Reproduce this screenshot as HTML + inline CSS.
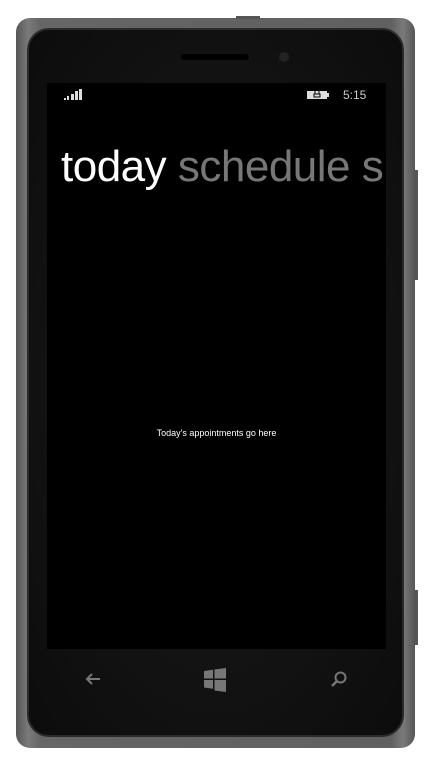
<!DOCTYPE html>
<html><head><style>
body{margin:0;width:431px;height:768px;background:#fff;position:relative;overflow:hidden;font-family:"Liberation Sans",sans-serif}
.body{position:absolute;left:16px;top:18px;width:399px;height:730px;border-radius:14px;background:linear-gradient(90deg,#555,#7a7a7a 3%,#666 6%,#606060 94%,#7a7a7a 97%,#555)}
.btn{position:absolute;background:#555}
.bez{position:absolute;left:27px;top:28px;width:377px;height:709px;border-radius:22px;background:radial-gradient(ellipse at 50% 50%,#1c1c1c,#0c0c0c);border:2px solid #2a2a2a;box-sizing:border-box}
.scr{position:absolute;left:47px;top:83px;width:339px;height:566px;background:#000;overflow:hidden}
.spk{position:absolute;left:181px;top:54px;width:68px;height:6px;border-radius:3px;background:#000}
.cam{position:absolute;left:279px;top:52px;width:10px;height:10px;border-radius:50%;background:#222}
</style></head><body>
<div class="body"></div>
<div class="btn" style="left:236px;top:16px;width:24px;height:3px"></div>
<div class="btn" style="left:414px;top:170px;width:4px;height:110px"></div>
<div class="btn" style="left:414px;top:590px;width:4px;height:55px"></div>
<div class="bez"></div>
<div class="spk"></div><div class="cam"></div>
<div class="scr">
 <svg style="position:absolute;left:17px;top:6px" width="20" height="12"><rect x="0" y="9" width="2" height="2" fill="#ddd"/><rect x="3" y="7" width="2" height="4" fill="#ddd"/><rect x="7" y="5" width="3" height="6" fill="#ddd"/><rect x="11" y="2" width="3" height="9" fill="#ddd"/><rect x="15" y="0" width="3" height="11" fill="#ddd"/></svg>
 <svg style="position:absolute;left:260px;top:6px" width="24" height="12"><rect x="0" y="2" width="20" height="8" fill="#ddd"/><rect x="20" y="4" width="2" height="4" fill="#ddd"/><path d="M8 1v4M12 1v4M7 5h6v3h-6z" stroke="#000" stroke-width="1" fill="none"/></svg>
 <div style="position:absolute;left:296px;top:5px;color:#ccc;font-size:12px">5:15</div>
 <div style="position:absolute;left:14px;top:59px;font-size:44px;white-space:nowrap;color:#fff;letter-spacing:-0.5px">today <span style="color:#777">schedule s</span></div>
 <div style="position:absolute;left:0;width:339px;top:345px;text-align:center;color:#fff;font-size:9px">Today's appointments go here</div>
</div>
<svg style="position:absolute;left:84px;top:671px" width="18" height="16"><path d="M16 8H3M8 3L3 8l5 5" stroke="#777" stroke-width="2" fill="none"/></svg>
<svg style="position:absolute;left:204px;top:668px" width="24" height="24"><path d="M0 3l9-1.3v8.8H0zM10.5 1.5L22 0v10.5H10.5zM0 12h9v8.8L0 19.5zM10.5 12H22v12l-11.5-1.5z" fill="#777"/></svg>
<svg style="position:absolute;left:330px;top:670px" width="18" height="18"><circle cx="10.5" cy="7.5" r="5" stroke="#777" stroke-width="2" fill="none"/><path d="M7 11l-5 5" stroke="#777" stroke-width="2.5"/></svg>
</body></html>
